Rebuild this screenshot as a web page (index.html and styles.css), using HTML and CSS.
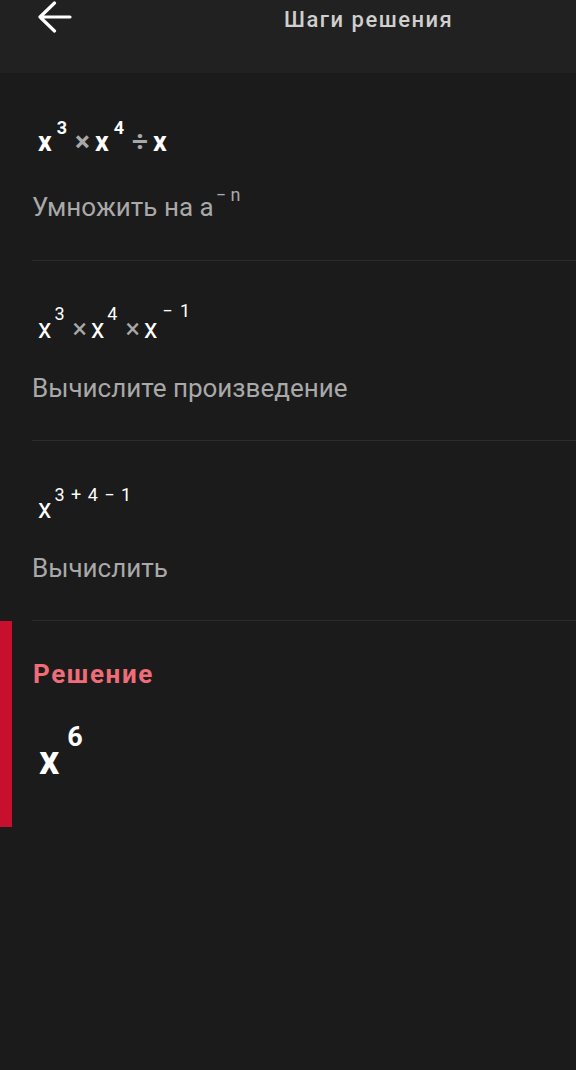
FILE: index.html
```html
<!DOCTYPE html>
<html lang="ru">
  <head>
    <title>Шаги решения</title>
    <meta name="viewport" content="width=device-width, initial-scale=1">
    <link rel="stylesheet" href="styles.css">
  </head>
  <body>
    <div class="top-bar">
      <button type="button" class="back-btn" title="Назад">
        <svg width="36" height="34" viewBox="0 0 36 34">
          <path d="M33 16 H3 M17.5 2 L3 16 L17.5 30" fill="none" stroke="#fff" stroke-width="3.2" stroke-linecap="round" stroke-linejoin="round"/>
        </svg>
      </button>
      <h1 class="top-title">Шаги решения</h1>
    </div>

    <div class="steps">
      <!-- step 1 -->
      <div class="step first">
        <div class="expr bold">
          <span class="v">x</span><sup class="pw">3</sup><span class="op">×</span><span class="v">x</span><sup class="pw">4</sup><span class="op">÷</span><span class="v">x</span>
        </div>
        <div class="step-note">Умножить на a<sup class="note-pw">− n</sup></div>
      </div>

      <!-- step 2 -->
      <div class="step">
        <div class="expr">
          <span class="v">x</span><sup class="pw">3</sup><span class="op">×</span><span class="v">x</span><sup class="pw">4</sup><span class="op">×</span><span class="v">x</span><sup class="pw neg">− 1</sup>
        </div>
        <div class="step-note">Вычислите произведение</div>
      </div>

      <!-- step 3 -->
      <div class="step">
        <div class="expr">
          <span class="v">x</span><sup class="pw sum">3 + 4 − 1</sup>
        </div>
        <div class="step-note">Вычислить</div>
      </div>

      <!-- answer -->
      <div class="answer">
        <div class="answer-title">Решение</div>
        <div class="answer-expr"><span class="v">x</span><sup class="pw">6</sup></div>
      </div>
    </div>
  </body>
</html>
```

FILE: styles.css
```css
body {
  margin: 0;
  background-color: #1b1b1b;
  font-family: Roboto, "Noto Sans", sans-serif;
  color: #fff;
}
.top-bar {
  height: 73px;
  background-color: #212121;
  position: relative;
}
.back-btn {
  position: absolute;
  left: 37px;
  top: 1px;
  padding: 0;
  border: none;
  background: none;
}
.top-title {
  margin: 0;
  padding: 5px 0 0 284px;
  font-size: 22px;
  font-weight: 500;
  letter-spacing: 1.5px;
  color: #cfcfcf;
  line-height: 30px;
}

/* each step: expression + explanation */
.step {
  margin-left: 32px;
  height: 180px;
  border-bottom: 1px solid #2b2b2b;
  box-sizing: border-box;
  padding-top: 48px;
}
.step.first {
  height: 188px;
  padding-top: 49px;
}
.expr {
  font-size: 27px;
  line-height: 40px;
  height: 40px;
  padding-left: 6px;
  white-space: nowrap;
}
.expr.bold {
  font-weight: 700;
}
.expr .pw {
  font-size: 18px;
  vertical-align: 18px;
  line-height: 0;
  margin-left: 3px;
  margin-right: 8px;
}
.expr.bold .pw {
  font-size: 18px;
  vertical-align: 17px;
  margin-left: 5px;
  margin-right: 8px;
}
.expr .pw.neg {
  vertical-align: 21px;
  margin-left: 5px;
  word-spacing: 3px;
}
.expr .pw.sum {
  vertical-align: 17px;
  margin-left: 3px;
  word-spacing: 2px;
}
.expr .op {
  color: #a8a8a8;
  font-size: 27px;
  margin-right: 4px;
}
.expr.bold .op {
  font-size: 28px;
  margin-right: 5px;
}
.step-note {
  margin-top: 24px;
  font-size: 26px;
  color: #a9a9a9;
  line-height: 30px;
}
.first .step-note {
  margin-top: 30px;
}
.note-pw {
  font-size: 18px;
  vertical-align: 15px;
  line-height: 0;
  margin-left: 2px;
}

/* final answer */
.answer {
  border-left: 12px solid #c8102e;
  height: 206px;
  box-sizing: border-box;
  padding: 38px 0 0 21px;
}
.answer-title {
  font-size: 26px;
  font-weight: 700;
  letter-spacing: 1.6px;
  color: #ef6d78;
  line-height: 30px;
}
.answer-expr {
  margin-top: 48px;
  padding-left: 6px;
  font-size: 40px;
  font-weight: 700;
  line-height: 48px;
}
.answer-expr .pw {
  font-size: 27px;
  vertical-align: 28px;
  line-height: 0;
  margin-left: 8px;
}
```
